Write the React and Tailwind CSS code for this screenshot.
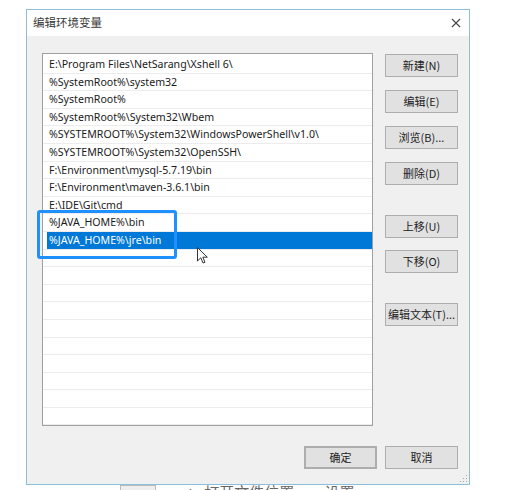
import { useState } from "react";

const paths = [
  "E:\\Program Files\\NetSarang\\Xshell 6\\",
  "%SystemRoot%\\system32",
  "%SystemRoot%",
  "%SystemRoot%\\System32\\Wbem",
  "%SYSTEMROOT%\\System32\\WindowsPowerShell\\v1.0\\",
  "%SYSTEMROOT%\\System32\\OpenSSH\\",
  "F:\\Environment\\mysql-5.7.19\\bin",
  "F:\\Environment\\maven-3.6.1\\bin",
  "E:\\IDE\\Git\\cmd",
  "%JAVA_HOME%\\bin",
  "%JAVA_HOME%\\jre\\bin",
];

const TOTAL_ROWS = 21;

const Btn = ({ children, className = "" }) => (
  <button
    className={`w-[73px] h-[23px] bg-[#e1e1e1] border border-[#adadad] text-[11px] text-[#222] leading-none ${className}`}
  >
    {children}
  </button>
);

export default function App() {
  const [selected, setSelected] = useState(10);

  const rows = Array.from({ length: TOTAL_ROWS }, (_, i) => paths[i] ?? "");

  return (
    <div
      className="relative w-[506px] h-[490px] bg-white overflow-hidden"
      style={{ fontFamily: '"Noto Sans", "Noto Sans CJK SC", sans-serif' }}
    >
      <div className="ml-[26px] mt-[9px] w-[444px] h-[476px] border border-[#8cc0d8] flex flex-col">
        {/* title bar */}
        <div className="h-[26px] bg-white flex items-center justify-between pl-[6px] pr-[7px]">
          <span
            className="text-[11.5px] text-[#3a3a3a]"
            style={{ fontFamily: '"Noto Sans CJK SC", sans-serif' }}
          >
            编辑环境变量
          </span>
          <svg width="10" height="10" viewBox="0 0 10 10" className="mr-[1px]">
            <path d="M1 1 L9 9 M9 1 L1 9" stroke="#444" strokeWidth="1.1" />
          </svg>
        </div>

        {/* body */}
        <div className="flex-1 bg-[#f0f0f0] flex flex-col pl-[15px] pr-[11px] pt-[17px]">
          <div className="flex">
            <div className="w-[331px] h-[373px] bg-white border border-[#a0a0a0] pt-[2px] overflow-hidden">
              {rows.map((text, i) => (
                <div
                  key={i}
                  onClick={() => text && setSelected(i)}
                  className="h-[17.6px] border-b border-[#ececec] pl-[4px]"
                >
                  <div
                    className={`h-full flex items-center pl-[2px] text-[10.6px] leading-none whitespace-nowrap ${
                      selected === i ? "bg-[#0078d7] text-white" : "text-[#1a1a1a]"
                    }`}
                  >
                    {text}
                  </div>
                </div>
              ))}
            </div>

            <div
              className="ml-[12px] flex flex-col pt-[1px]"
              style={{ fontFamily: '"Noto Sans CJK SC", sans-serif' }}
            >
              <Btn>新建(N)</Btn>
              <Btn className="mt-[13px]">编辑(E)</Btn>
              <Btn className="mt-[13px]">浏览(B)...</Btn>
              <Btn className="mt-[13px]">删除(D)</Btn>
              <Btn className="mt-[30px]">上移(U)</Btn>
              <Btn className="mt-[12px]">下移(O)</Btn>
              <Btn className="mt-[30px]">编辑文本(T)...</Btn>
            </div>
          </div>

          <div
            className="flex justify-end gap-[8px] mt-[20px]"
            style={{ fontFamily: '"Noto Sans CJK SC", sans-serif' }}
          >
            <Btn className="w-[72px] border-2 border-[#0078d7]">确定</Btn>
            <Btn>取消</Btn>
          </div>
        </div>
      </div>

      {/* background window peeking out below */}
      <div className="h-[5px] overflow-hidden flex items-start pl-[120px] gap-[30px] text-[15px] text-[#666] leading-[14px]">
        <span className="w-[36px] h-[10px] border border-[#bbb] bg-[#eee]" />
        <span style={{ fontFamily: '"Noto Sans CJK SC", sans-serif' }}>← 打开文件位置</span>
        <span style={{ fontFamily: '"Noto Sans CJK SC", sans-serif' }}>设置</span>
      </div>

      {/* annotation box */}
      <div className="absolute left-[37px] top-[210px] w-[140px] h-[49px] border-[3px] border-[#1e90ff] rounded-[3px]" />

      {/* mouse cursor */}
      <svg className="absolute left-[197px] top-[247px]" width="12" height="18" viewBox="0 0 12 18">
        <path
          d="M0.5 0.5 L0.5 14 L3.8 10.8 L6 16 L8 15.2 L5.8 10.2 L10.3 10.2 Z"
          fill="white"
          stroke="#333"
          strokeWidth="1"
          strokeLinejoin="round"
        />
      </svg>

      {/* resize grip */}
      <svg className="absolute left-[460px] top-[475px]" width="8" height="8" viewBox="0 0 8 8">
        <rect x="6" y="0" width="1" height="1" fill="#aaa" />
        <rect x="3" y="3" width="1" height="1" fill="#aaa" />
        <rect x="6" y="3" width="1" height="1" fill="#aaa" />
        <rect x="0" y="6" width="1" height="1" fill="#aaa" />
        <rect x="3" y="6" width="1" height="1" fill="#aaa" />
        <rect x="6" y="6" width="1" height="1" fill="#aaa" />
      </svg>
    </div>
  );
}
